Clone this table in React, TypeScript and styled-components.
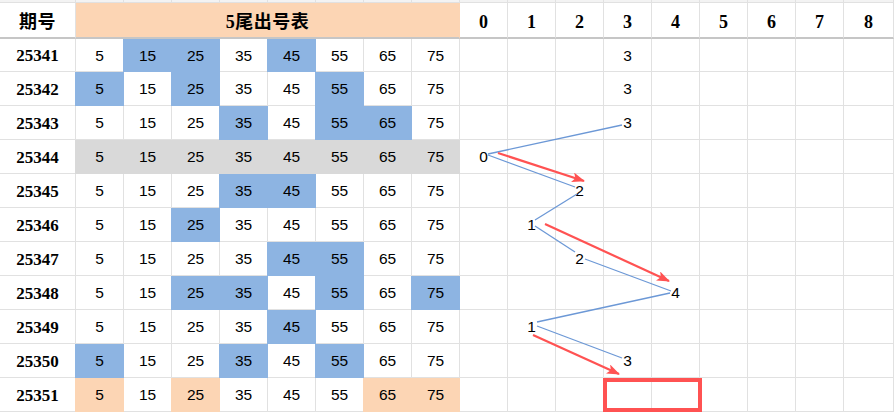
import styled, { createGlobalStyle } from 'styled-components';

const GlobalStyle = createGlobalStyle`
  html, body {
    margin: 0;
    padding: 0;
    background: #ffffff;
    overflow: hidden;
  }
  * { box-sizing: border-box; }
`;

const GRID = '#e1e1e1';
const BLUE = '#8db4e2';
const PEACH = '#fcd5b4';
const GREY = '#d9d9d9';
const RED = '#ff5252';
const LINE = '#6c98d6';

const Sheet = styled.div`
  position: relative;
  display: grid;
  grid-template-rows: 3px 36px 33px repeat(10, 34px) 1fr;
  width: 894px;
  height: 413px;
  overflow: hidden;
  background: #ffffff;
`;

const Row = styled.div`
  display: grid;
  grid-template-columns: 76px repeat(16, 48px) 1fr;
  grid-template-rows: 100%;
  min-height: 0;
  overflow: hidden;
`;

const StripCell = styled.div`
  background: #f3f3f3;
  border-right: 1px solid ${GRID};
  border-bottom: 1px solid ${GRID};
`;

const HeadCell = styled.div<{ $span?: number; $fill?: string }>`
  grid-column: span ${(p) => p.$span ?? 1};
  display: flex;
  align-items: center;
  justify-content: center;
  background: ${(p) => p.$fill ?? '#ffffff'};
  border-right: 1px solid ${(p) => p.$fill ?? GRID};
  border-bottom: 2px solid #c6c6c6;
  font-family: 'Liberation Serif', 'Noto Sans CJK SC', serif;
  font-weight: 700;
  font-size: 18px;
  line-height: 1;
  color: #000000;
  padding-top: 4px;
`;

const CjkTitle = styled.span`
  font-family: 'Liberation Serif', 'Noto Sans CJK SC', sans-serif;
  font-size: 18px;
  font-weight: 700;
  line-height: 1;
  letter-spacing: 0.5px;
`;

const IssueCell = styled.div`
  display: flex;
  align-items: center;
  justify-content: center;
  border-right: 1px solid ${GRID};
  border-bottom: 1px solid ${GRID};
  font-family: 'Liberation Serif', serif;
  font-weight: 700;
  font-size: 17px;
  line-height: 1;
  color: #000000;
  padding-top: 1px;
`;

const NumCell = styled.div<{ $fill?: string }>`
  display: flex;
  align-items: center;
  justify-content: center;
  background: ${(p) => p.$fill ?? '#ffffff'};
  border-right: 1px solid ${(p) => p.$fill ?? GRID};
  border-bottom: 1px solid ${(p) => p.$fill ?? GRID};
  box-shadow: ${(p) => (p.$fill ? `-1px 0 0 0 ${p.$fill}` : 'none')};
  font-family: 'Liberation Sans', sans-serif;
  font-size: 15.5px;
  line-height: 1;
  color: #000000;
  padding-top: 1px;
`;

const Overlay = styled.svg`
  position: absolute;
  left: 0;
  top: 0;
  pointer-events: none;
`;

type Mark = 'b' | 'g' | 'p' | '';

const ROWS: { issue: string; marks: Mark[]; hit?: number }[] = [
  { issue: '25341', marks: ['', 'b', 'b', '', 'b', '', '', ''], hit: 3 },
  { issue: '25342', marks: ['b', '', 'b', '', '', 'b', '', ''], hit: 3 },
  { issue: '25343', marks: ['', '', '', 'b', '', 'b', 'b', ''], hit: 3 },
  { issue: '25344', marks: ['g', 'g', 'g', 'g', 'g', 'g', 'g', 'g'], hit: 0 },
  { issue: '25345', marks: ['', '', '', 'b', 'b', '', '', ''], hit: 2 },
  { issue: '25346', marks: ['', '', 'b', '', '', '', '', ''], hit: 1 },
  { issue: '25347', marks: ['', '', '', '', 'b', 'b', '', ''], hit: 2 },
  { issue: '25348', marks: ['', '', 'b', 'b', '', 'b', '', 'b'], hit: 4 },
  { issue: '25349', marks: ['', '', '', '', 'b', '', '', ''], hit: 1 },
  { issue: '25350', marks: ['b', '', '', 'b', '', 'b', '', ''], hit: 3 },
  { issue: '25351', marks: ['p', '', 'p', '', '', '', 'p', 'p'] },
];

const TAILS = [5, 15, 25, 35, 45, 55, 65, 75];
const DIGITS = [0, 1, 2, 3, 4, 5, 6, 7, 8];

const fillOf = (m: Mark) => (m === 'b' ? BLUE : m === 'g' ? GREY : m === 'p' ? PEACH : undefined);

const blueLines = [
  [622, 125, 488, 154],
  [488, 155, 575, 187],
  [577, 194, 535, 220],
  [535, 226, 575, 252],
  [585, 259, 671, 291],
  [670, 293, 537, 322],
  [537, 326, 622, 358],
];

const redArrows = [
  [498, 153, 584, 181],
  [545, 224, 669, 281],
  [533, 335, 619, 374],
];

function App() {
  return (
    <>
      <GlobalStyle />
      <Sheet>
        <Row>
          {Array.from({ length: 18 }).map((_, i) => (
            <StripCell key={i} />
          ))}
        </Row>
        <Row>
          <HeadCell>
            <CjkTitle>期号</CjkTitle>
          </HeadCell>
          <HeadCell $span={8} $fill={PEACH}>
            <CjkTitle>5尾出号表</CjkTitle>
          </HeadCell>
          {DIGITS.map((d) => (
            <HeadCell key={d}>{d}</HeadCell>
          ))}
          <HeadCell />
        </Row>
        {ROWS.map((r) => (
          <Row key={r.issue}>
            <IssueCell>{r.issue}</IssueCell>
            {TAILS.map((t, i) => (
              <NumCell key={t} $fill={fillOf(r.marks[i])}>
                {t}
              </NumCell>
            ))}
            {DIGITS.map((d) => (
              <NumCell key={d}>{r.hit === d ? d : ''}</NumCell>
            ))}
            <NumCell />
          </Row>
        ))}

        <Overlay width={894} height={413} viewBox="0 0 894 413">
          <defs>
            <marker
              id="head"
              markerUnits="userSpaceOnUse"
              markerWidth="13"
              markerHeight="10"
              refX="12"
              refY="5"
              orient="auto"
            >
              <path d="M0 0 L13 5 L0 10 L3 5 Z" fill={RED} />
            </marker>
          </defs>
          {blueLines.map(([x1, y1, x2, y2], i) => (
            <line key={i} x1={x1} y1={y1} x2={x2} y2={y2} stroke={LINE} strokeWidth={1.3} />
          ))}
          {redArrows.map(([x1, y1, x2, y2], i) => (
            <line
              key={i}
              x1={x1}
              y1={y1}
              x2={x2}
              y2={y2}
              stroke={RED}
              strokeWidth={2.2}
              markerEnd="url(#head)"
            />
          ))}
          <rect x={605} y={380} width={95} height={30} fill="none" stroke={RED} strokeWidth={4} />
        </Overlay>
      </Sheet>
    </>
  );
}

export default App;
